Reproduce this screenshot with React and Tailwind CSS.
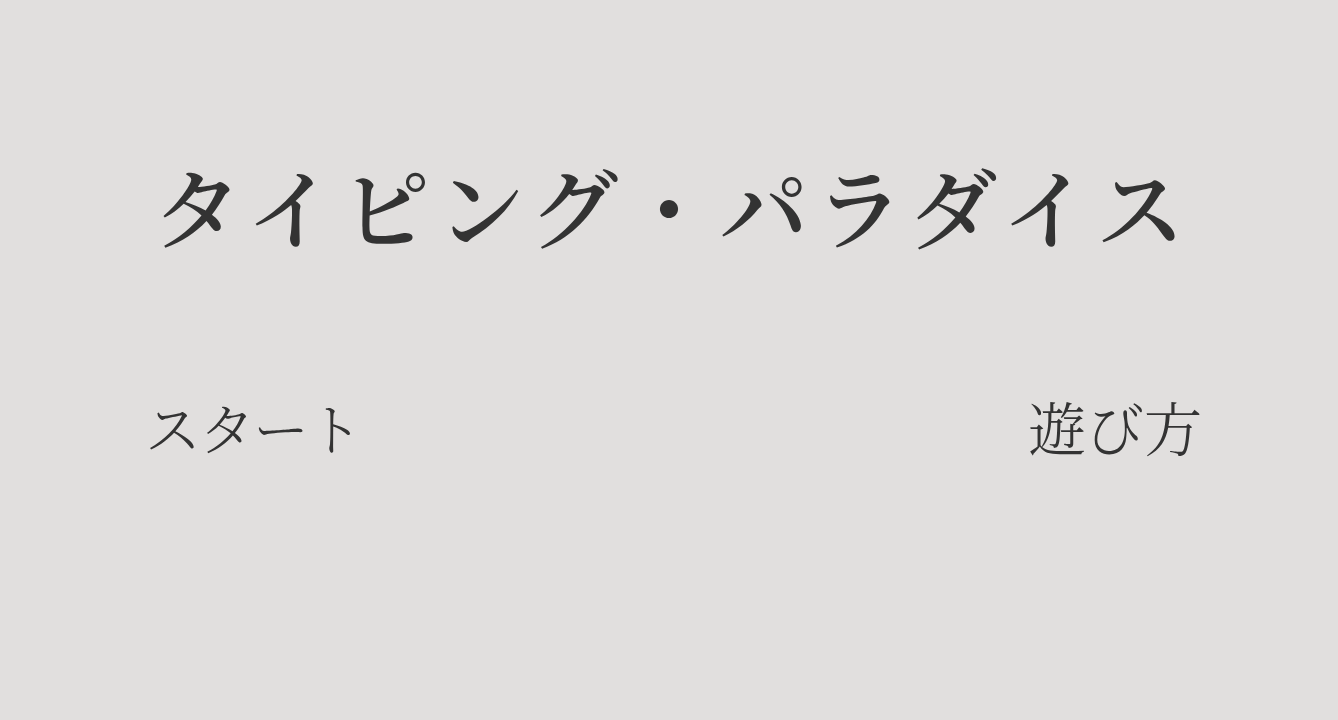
export default function App() {
  return (
    <div className="min-h-screen w-full bg-[#e1dfde] text-[#333333] font-['Noto_Serif_CJK_JP','Noto_Sans_CJK_JP',serif]">
      {/* タイトル */}
      <h1 className="pt-[149px] text-center text-[88px] leading-[110px] tracking-[7px] pl-[7px] font-semibold">
        タイピング・パラダイス
      </h1>

      {/* メニュー */}
      <nav className="mt-[131px] flex items-center justify-between pl-[145px] pr-[136px]">
        <button className="text-[56px] leading-[72px] font-light tracking-[-2px]">スタート</button>
        <button className="text-[58px] leading-[72px] font-light">遊び方</button>
      </nav>
    </div>
  )
}
